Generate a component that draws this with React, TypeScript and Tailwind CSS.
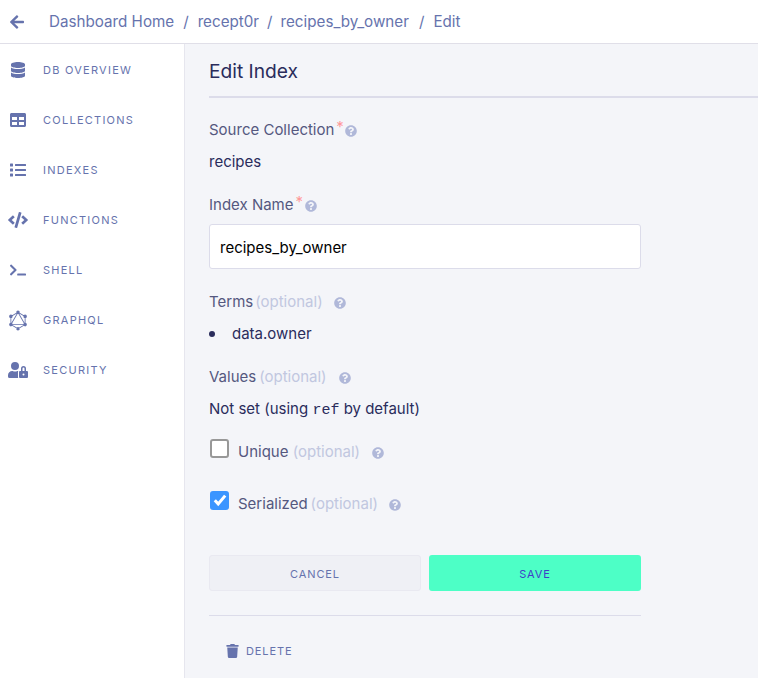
import { FaArrowLeft, FaDatabase, FaTable, FaList, FaCode, FaTerminal, FaUserLock, FaTrash, FaQuestionCircle } from "react-icons/fa";
import { SiGraphql } from "react-icons/si";
import type { ReactNode } from "react";

const nav: [string, ReactNode][] = [
  ["DB OVERVIEW", <FaDatabase className="w-[14px] h-[16px]" />],
  ["COLLECTIONS", <FaTable className="w-[16px] h-[16px]" />],
  ["INDEXES", <FaList className="w-[16px] h-[16px]" />],
  ["FUNCTIONS", <FaCode className="w-[20px] h-[16px]" />],
  ["SHELL", <FaTerminal className="w-[16px] h-[14px]" />],
  ["GRAPHQL", <SiGraphql className="w-[20px] h-[21px]" />],
  ["SECURITY", <FaUserLock className="w-[20px] h-[16px]" />],
];

function Help({ className = "" }: { className?: string }) {
  return <FaQuestionCircle className={"w-[12px] h-[12px] text-[#b0b8d9] shrink-0 " + className} />;
}

function Opt({ children }: { children: ReactNode }) {
  return <span className="text-[#c1c7e0]">{children}</span>;
}

export default function App() {
  return (
    <div className="w-[758px] h-[678px] overflow-hidden bg-white flex flex-col font-['Inter',sans-serif] text-[15px] leading-[20px]">
      <header className="h-[44px] shrink-0 flex items-center border-b border-[#e0dfe8] bg-white text-[#6673ad]">
        <FaArrowLeft className="ml-[10px] w-[14px] h-[16px] text-[#6673ad]" />
        <nav className="ml-[25px] flex gap-[9px] text-[15.2px]">
          <span>Dashboard Home</span><span>/</span><span>recept0r</span><span className="-ml-[1px]">/</span><span className="-ml-[1px]">recipes_by_owner</span><span className="ml-[1px]">/</span><span>Edit</span>
        </nav>
      </header>
      <div className="flex flex-1 min-h-0">
        <aside className="w-[185px] shrink-0 bg-white border-r border-[#e6e6ee] pt-[1px]">
          {nav.map(([label, icon]) => (
            <div key={label} className="h-[50px] flex items-center text-[#6673ad]">
              <span className="w-[36px] flex justify-center shrink-0">{icon}</span>
              <span className="ml-[7px] text-[11px] tracking-[1.25px] font-normal">{label}</span>
            </div>
          ))}
        </aside>
        <main className="flex-1 bg-[#f4f5f9] pl-[24px] min-w-0">
          <h1 className="text-[19.2px] leading-[24px] text-[#2a2c5c] pt-[15px] pb-[13px] border-b-2 border-[#dcdcea]">Edit Index</h1>
          <div className="w-[432px]">
            <div className="mt-[22px] flex items-center text-[#55587f]">
              Source Collection<span className="text-[#f99] text-[15px] leading-[12px] self-start mt-[1px] ml-[2px]">*</span><Help className="ml-[1px] mt-[1px]" />
            </div>
            <div className="mt-[12px] text-[#2a2c5c]">recipes</div>
            <div className="mt-[23px] flex items-center text-[#55587f]">
              Index Name<span className="text-[#f99] text-[15px] leading-[12px] self-start mt-[1px] ml-[2px]">*</span><Help className="ml-[2px] mt-[1px]" />
            </div>
            <div className="mt-[9px] h-[45px] bg-white border border-[#dcdcea] rounded-[3px] flex items-center pl-[10px] pt-[3px] text-black">recipes_by_owner</div>
            <div className="mt-[23px] flex items-center text-[#55587f]">
              Terms<span className="ml-[2px]"><Opt>(optional)</Opt></span><Help className="ml-[11px] mt-[1px]" />
            </div>
            <div className="mt-[12px] flex items-center text-[#2a2c5c]">
              <span className="w-[6px] h-[6px] rounded-full bg-[#2a2c5c]" />
              <span className="ml-[17px]">data.owner</span>
            </div>
            <div className="mt-[23px] flex items-center text-[#55587f]">
              Values<span className="ml-[3px]"><Opt>(optional)</Opt></span><Help className="ml-[12px] mt-[1px]" />
            </div>
            <div className="mt-[12px] text-[#2a2c5c]">
              Not set (using <code className="font-['Liberation_Mono',monospace] text-[15px]">ref</code> by default)
            </div>
            <div className="mt-[18px] h-[26px] flex items-center text-[#55587f]">
              <span className="ml-[1px] -mt-[8px] w-[19px] h-[19px] rounded-[3px] bg-white border-2 border-[#989898]" />
              <span className="ml-[9px]">Unique&nbsp;<Opt>(optional)</Opt></span><Help className="ml-[12px] mt-[1px]" />
            </div>
            <div className="mt-[26px] h-[26px] flex items-center text-[#55587f]">
              <span className="ml-[1px] -mt-[8px] w-[19px] h-[19px] rounded-[3px] bg-[#3b95ff] flex items-center justify-center">
                <svg viewBox="0 0 16 16" className="w-[16px] h-[16px]"><path d="M2.8 8.3l3.4 3.6L13.2 3.6" fill="none" stroke="#fff" strokeWidth="3" /></svg>
              </span>
              <span className="ml-[9px]">Serialized<span className="ml-[3px]"><Opt>(optional)</Opt></span></span><Help className="ml-[11px] mt-[1px]" />
            </div>
            <div className="mt-[38px] flex gap-[8px]">
              <button className="w-[212px] shrink-0 h-[36px] rounded-[3px] bg-[#eff0f5] border border-[#e9e9f1] text-[#6673ad] text-[11px] tracking-[0.9px] font-normal pt-[1px]">CANCEL</button>
              <button className="w-[212px] shrink-0 h-[36px] rounded-[3px] bg-[#4dffc6] text-[#3f3fc8] text-[11px] tracking-[0.9px] font-normal pt-[1px]">SAVE</button>
            </div>
            <div className="mt-[24px] border-t border-[#dcdcea]" />
            <div className="mt-[25px] ml-[17px] flex items-center text-[#6673ad]">
              <FaTrash className="w-[13px] h-[14px]" />
              <span className="ml-[7px] text-[11px] tracking-[0.9px] font-normal">DELETE</span>
            </div>
          </div>
        </main>
      </div>
    </div>
  );
}
